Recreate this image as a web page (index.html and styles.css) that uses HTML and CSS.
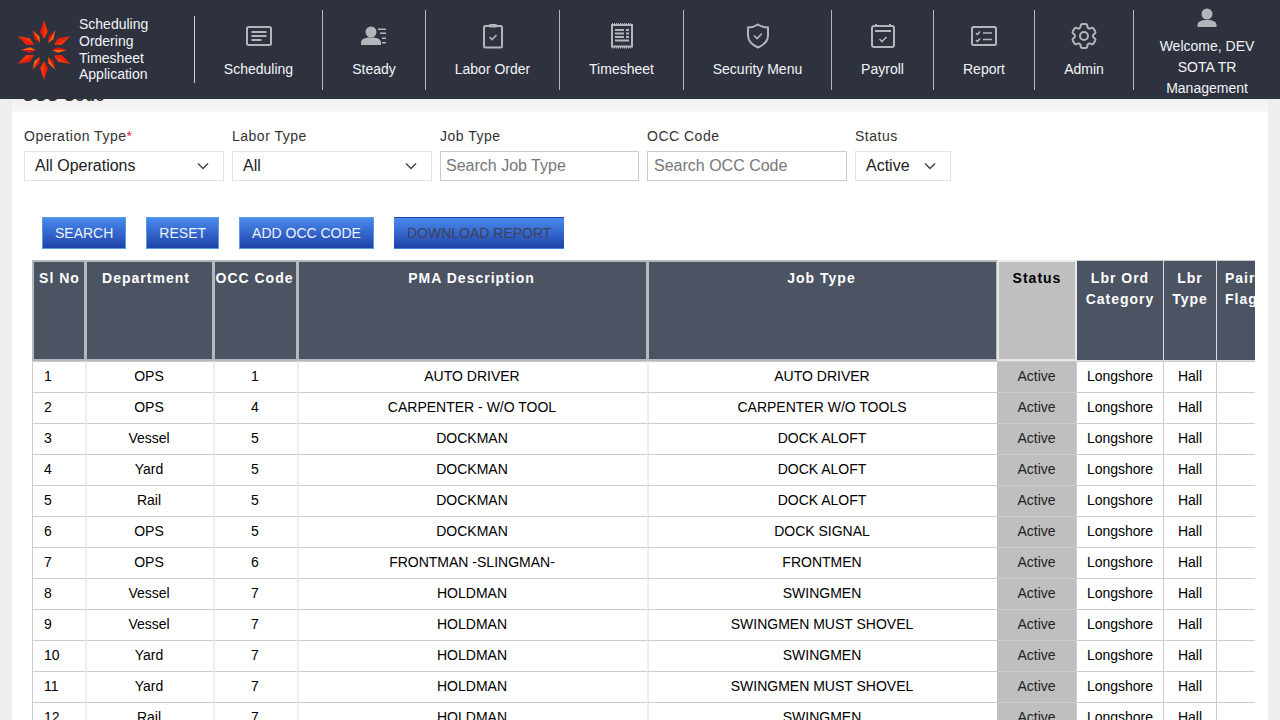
FILE: index.html
```html
<!DOCTYPE html>
<html>
<head>
  <title>OCC Code</title>
  <meta name="viewport" content="width=device-width, initial-scale=1.0">
  <link rel="stylesheet" href="styles.css">
</head>
<body>
  <header class="topbar">
    <div class="brand">
      <svg class="brand-logo" width="60" height="60" viewBox="-30 -30 60 60">
        <defs>
          <g id="spike-long">
            <polygon points="0,-30 -3.800,-18 0,-11" fill="#ee1c08"/>
            <polygon points="0,-30 3.800,-18 0,-11" fill="#f73406"/>
          </g>
          <g id="spike-short">
            <polygon points="0,-23 -2.800,-14 0,-8" fill="#e01408"/>
            <polygon points="0,-23 2.800,-14 0,-8" fill="#ff6210"/>
          </g>
        </defs>
        <use href="#spike-long"/>
        <use href="#spike-short" transform="rotate(30)"/>
        <use href="#spike-long" transform="rotate(62)"/>
        <use href="#spike-short" transform="rotate(90)"/>
        <use href="#spike-long" transform="rotate(118)"/>
        <use href="#spike-short" transform="rotate(150)"/>
        <use href="#spike-long" transform="rotate(180)"/>
        <use href="#spike-short" transform="rotate(210)"/>
        <use href="#spike-long" transform="rotate(242)"/>
        <use href="#spike-short" transform="rotate(270)"/>
        <use href="#spike-long" transform="rotate(298)"/>
        <use href="#spike-short" transform="rotate(330)"/>
      </svg>
      <div class="brand-name">Scheduling<br>Ordering<br>Timesheet<br>Application</div>
    </div>

    <nav class="nav">
      <a class="nav-item w-scheduling">
        <svg class="icon" viewBox="0 0 32 32"><rect x="4" y="7" width="24" height="18" rx="1.500"/><path class="bars" d="M8.500 12h15M8.500 16h15M8.500 20h10"/></svg>
        <span>Scheduling</span>
      </a>
      <a class="nav-item w-steady">
        <svg class="icon" viewBox="0 0 32 32"><circle class="solid" cx="13" cy="12" r="5.500"/><path class="solid" d="M3 25v-2.500c0-3 3-5 10-5s10 2 10 5V25z"/><path class="thin" d="M20 9.300h8M22 13.300h6M24 18.300h4M24 22.700h4"/></svg>
        <span>Steady</span>
      </a>
      <a class="nav-item w-labor">
        <svg class="icon" viewBox="0 0 32 32"><rect x="7" y="6" width="18" height="21.500" rx="1.500"/><rect class="solid" x="12" y="4" width="8" height="3.500" rx="1"/><path class="thin" d="M12.500 17l2.500 2.500 4.500-4.500"/></svg>
        <span>Labor Order</span>
      </a>
      <a class="nav-item w-timesheet">
        <svg class="icon" viewBox="0 0 32 32"><rect x="6" y="5" width="20" height="21.500"/><path class="perf" d="M6 4h20M6 27.500h20"/><path class="bars" d="M9 10h9M9 13.500h9M9 17h9M9 20.500h14M20 10h3M20 13.500h3M20 17h3"/></svg>
        <span>Timesheet</span>
      </a>
      <a class="nav-item w-security">
        <svg class="icon" viewBox="0 0 32 32"><path d="M16 4.500c3 2 6.500 3 10 3v8c0 6-4.500 9.500-10 12-5.500-2.500-10-6-10-12v-8c3.500 0 7-1 10-3z"/><path class="thin" d="M12 15.500l3 3 5-5"/></svg>
        <span>Security Menu</span>
      </a>
      <a class="nav-item w-payroll">
        <svg class="icon" viewBox="0 0 32 32"><rect x="5" y="6" width="22" height="21" rx="2"/><path d="M9 4v2M23 4v2"/><path class="bars" d="M8 11h16"/><path class="thin" d="M12.500 19l2.500 2.500 4.500-4.500"/></svg>
        <span>Payroll</span>
      </a>
      <a class="nav-item w-report">
        <svg class="icon" viewBox="0 0 32 32"><rect x="4" y="7" width="24" height="18" rx="1.500"/><path class="thin" d="M8 13l1.500 1.500 2.500-3M8 20l1.500 1.500 2.500-3M15 13h9M15 19.500h9"/></svg>
        <span>Report</span>
      </a>
      <a class="nav-item w-admin">
        <svg class="icon gear" viewBox="0 0 24 24"><path d="M9.594 3.94c.09-.542.56-.94 1.11-.94h2.593c.55 0 1.02.398 1.11.94l.213 1.281c.063.374.313.686.645.87.074.04.147.083.22.127.325.196.72.257 1.075.124l1.217-.456a1.125 1.125 0 0 1 1.37.49l1.296 2.247a1.125 1.125 0 0 1-.26 1.431l-1.003.827c-.293.241-.438.613-.43.992a7.723 7.723 0 0 1 0 .255c-.008.378.137.75.43.991l1.004.827c.424.35.534.955.26 1.43l-1.298 2.247a1.125 1.125 0 0 1-1.369.491l-1.217-.456c-.355-.133-.75-.072-1.076.124a6.47 6.47 0 0 1-.22.128c-.331.183-.581.495-.644.869l-.213 1.281c-.09.543-.56.94-1.11.94h-2.594c-.55 0-1.019-.398-1.11-.94l-.213-1.281c-.062-.374-.312-.686-.644-.87a6.52 6.52 0 0 1-.22-.127c-.325-.196-.72-.257-1.076-.124l-1.217.456a1.125 1.125 0 0 1-1.369-.49l-1.297-2.247a1.125 1.125 0 0 1 .26-1.431l1.004-.827c.292-.24.437-.613.43-.991a6.932 6.932 0 0 1 0-.255c.007-.38-.138-.751-.43-.992l-1.004-.827a1.125 1.125 0 0 1-.26-1.43l1.297-2.247a1.125 1.125 0 0 1 1.37-.491l1.216.456c.356.133.751.072 1.076-.124.072-.044.146-.086.22-.128.332-.183.582-.495.644-.869l.214-1.28Z"/><circle cx="12" cy="12" r="3"/></svg>
        <span>Admin</span>
      </a>
      <div class="nav-user">
        <svg class="user-icon" width="20" height="20" viewBox="0 0 20 20"><circle cx="10" cy="6" r="5.500"/><path d="M.5 19v-2c0-3 3-5 9.500-5s9.500 2 9.500 5v2z"/></svg>
        <span>Welcome, DEV</span>
        <span>SOTA TR</span>
        <span>Management</span>
      </div>
    </nav>
  </header>

  <main class="page">
    <div class="title-band"><h2>OCC Code</h2></div>

    <section class="card">
      <form class="filters">
        <div class="field f-op">
          <label>Operation Type<em>*</em></label>
          <div class="select"><span>All Operations</span><svg class="chev" width="12" height="8" viewBox="0 0 12 8"><path d="M1 1.500l5 5 5-5"/></svg></div>
        </div>
        <div class="field f-labor">
          <label>Labor Type</label>
          <div class="select"><span>All</span><svg class="chev" width="12" height="8" viewBox="0 0 12 8"><path d="M1 1.500l5 5 5-5"/></svg></div>
        </div>
        <div class="field f-job">
          <label>Job Type</label>
          <input type="text" placeholder="Search Job Type">
        </div>
        <div class="field f-occ">
          <label>OCC Code</label>
          <input type="text" placeholder="Search OCC Code">
        </div>
        <div class="field f-status">
          <label>Status</label>
          <div class="select"><span>Active</span><svg class="chev" width="12" height="8" viewBox="0 0 12 8"><path d="M1 1.500l5 5 5-5"/></svg></div>
        </div>
      </form>

      <div class="actions">
        <button type="button" class="btn">SEARCH</button>
        <button type="button" class="btn">RESET</button>
        <button type="button" class="btn">ADD OCC CODE</button>
        <button type="button" class="btn btn-disabled">DOWNLOAD REPORT</button>
      </div>

      <div class="table-wrap">
        <table class="grid">
          <colgroup>
            <col class="c-si"><col class="c-dept"><col class="c-occ"><col class="c-desc"><col class="c-job"><col class="c-status"><col class="c-cat"><col class="c-type"><col class="c-pair">
          </colgroup>
          <thead>
            <tr>
              <th class="boxed th-si">Sl No</th>
              <th class="boxed th-dept">Department</th>
              <th class="boxed">OCC Code</th>
              <th class="boxed">PMA Description</th>
              <th class="boxed">Job Type</th>
              <th class="th-status">Status</th>
              <th>Lbr Ord Category</th>
              <th>Lbr Type</th>
              <th>Pair Flag</th>
            </tr>
          </thead>
          <tbody>
            <tr><td class="si">1</td><td>OPS</td><td>1</td><td>AUTO DRIVER</td><td>AUTO DRIVER</td><td class="st">Active</td><td>Longshore</td><td>Hall</td><td></td></tr>
            <tr><td class="si">2</td><td>OPS</td><td>4</td><td>CARPENTER - W/O TOOL</td><td>CARPENTER W/O TOOLS</td><td class="st">Active</td><td>Longshore</td><td>Hall</td><td></td></tr>
            <tr><td class="si">3</td><td>Vessel</td><td>5</td><td>DOCKMAN</td><td>DOCK ALOFT</td><td class="st">Active</td><td>Longshore</td><td>Hall</td><td></td></tr>
            <tr><td class="si">4</td><td>Yard</td><td>5</td><td>DOCKMAN</td><td>DOCK ALOFT</td><td class="st">Active</td><td>Longshore</td><td>Hall</td><td></td></tr>
            <tr><td class="si">5</td><td>Rail</td><td>5</td><td>DOCKMAN</td><td>DOCK ALOFT</td><td class="st">Active</td><td>Longshore</td><td>Hall</td><td></td></tr>
            <tr><td class="si">6</td><td>OPS</td><td>5</td><td>DOCKMAN</td><td>DOCK SIGNAL</td><td class="st">Active</td><td>Longshore</td><td>Hall</td><td></td></tr>
            <tr><td class="si">7</td><td>OPS</td><td>6</td><td>FRONTMAN -SLINGMAN-</td><td>FRONTMEN</td><td class="st">Active</td><td>Longshore</td><td>Hall</td><td></td></tr>
            <tr><td class="si">8</td><td>Vessel</td><td>7</td><td>HOLDMAN</td><td>SWINGMEN</td><td class="st">Active</td><td>Longshore</td><td>Hall</td><td></td></tr>
            <tr><td class="si">9</td><td>Vessel</td><td>7</td><td>HOLDMAN</td><td>SWINGMEN MUST SHOVEL</td><td class="st">Active</td><td>Longshore</td><td>Hall</td><td></td></tr>
            <tr><td class="si">10</td><td>Yard</td><td>7</td><td>HOLDMAN</td><td>SWINGMEN</td><td class="st">Active</td><td>Longshore</td><td>Hall</td><td></td></tr>
            <tr><td class="si">11</td><td>Yard</td><td>7</td><td>HOLDMAN</td><td>SWINGMEN MUST SHOVEL</td><td class="st">Active</td><td>Longshore</td><td>Hall</td><td></td></tr>
            <tr><td class="si">12</td><td>Rail</td><td>7</td><td>HOLDMAN</td><td>SWINGMEN</td><td class="st">Active</td><td>Longshore</td><td>Hall</td><td></td></tr>
          </tbody>
        </table>
      </div>
    </section>
  </main>
</body>
</html>
```

FILE: styles.css
```css
* {
    box-sizing: border-box;
}

html, body {
    height: 720px;
    overflow: hidden;
}

body {
    font-family: "Liberation Sans", Arial, sans-serif;
    font-size: 14px;
    margin: 0;
    background-color: #eeeeee;
    color: #000;
}

/* top bar */
.topbar {
    display: flex;
    align-items: flex-start;
    height: 99px;
    background-color: #2e323e;
    color: #f2f4f8;
    position: relative;
    z-index: 2;
}

.brand {
    display: flex;
    align-items: center;
    width: 195px;
    height: 67px;
    margin-top: 16px;
    padding-left: 14px;
    border-right: 1px solid #d0d2d6;
}

.brand-logo {
    flex: none;
}

.brand-name {
    margin-left: 5px;
    line-height: 16.7px;
}

.nav {
    display: flex;
    align-items: flex-start;
    flex: 1;
}

.nav-item {
    display: flex;
    flex-direction: column;
    align-items: center;
    gap: 9px;
    height: 80px;
    margin-top: 10px;
    padding-top: 10px;
    line-height: 17px;
    border-right: 1px solid #b4b6ba;
}

.w-scheduling { width: 128px; }
.w-steady { width: 103px; }
.w-labor { width: 134px; }
.w-timesheet { width: 124px; }
.w-security { width: 148px; }
.w-payroll { width: 102px; }
.w-report { width: 101px; }
.w-admin { width: 99px; }

.icon {
    display: block;
    width: 32px;
    height: 32px;
    fill: none;
    stroke: #b3b5ba;
    stroke-width: 2;
}

.icon .bars {
    stroke-width: 2;
}

.icon .thin {
    stroke-width: 1.6;
}

.icon .solid {
    fill: #b3b5ba;
    stroke: none;
}

.icon .perf {
    stroke-width: 2;
    stroke-dasharray: 1 1;
}

.icon.gear {
    stroke-width: 1.5;
}

.nav-user {
    flex: 1;
    display: flex;
    flex-direction: column;
    align-items: center;
    padding-top: 8px;
    line-height: 21px;
}

.user-icon {
    fill: #b3b5ba;
    margin-bottom: 8px;
}

/* page */
.page {
    margin: 0 12px;
}

.title-band {
    height: 13px;
    padding-left: 10px;
    overflow: hidden;
    background: linear-gradient(#f0f0f0, #f8f8f8);
}

.title-band h2 {
    margin: -12px 0 0;
    font-size: 16px;
    line-height: 18px;
    letter-spacing: 0.3px;
    color: #333;
}

.card {
    background-color: #fff;
    height: 620px;
    padding: 16px 13px 0 12px;
}

.filters {
    display: flex;
    gap: 8px;
}

.field label {
    display: block;
    height: 16px;
    line-height: 16px;
    margin-bottom: 7px;
    letter-spacing: 0.5px;
    color: #333;
}

.field label em {
    color: #e0243c;
    font-style: normal;
}

.f-op, .f-labor {
    width: 200px;
}

.f-job {
    width: 199px;
}

.f-occ {
    width: 200px;
}

.f-status {
    width: 96px;
}

.select {
    display: flex;
    align-items: center;
    justify-content: space-between;
    height: 30px;
    padding: 0 14px 0 10px;
    border: 1px solid #e2e2e2;
    font-size: 16px;
    color: #222;
}

.chev {
    fill: none;
    stroke: #444;
    stroke-width: 1.5;
}

.field input {
    display: block;
    width: 100%;
    height: 30px;
    padding: 0 5px;
    border: 1px solid #cccccc;
    font-family: inherit;
    font-size: 16px;
    outline: none;
}

.f-occ input {
    padding-left: 6px;
}

.field input::placeholder {
    color: #777;
}

.actions {
    display: flex;
    gap: 20px;
    margin: 36px 0 0 18px;
}

.btn {
    height: 32px;
    padding: 0 12px;
    font-family: inherit;
    font-size: 14px;
    color: #eef2fb;
    border: 1px solid #5a9be8;
    background: linear-gradient(#4a8aee, #1f43a8);
}

.btn-disabled {
    padding: 0 13px;
    color: #3d4258;
    border: none;
    border-top: 1px solid #1f43a8;
    border-bottom: 1px solid #3f84e6;
}

.table-wrap {
    width: 1223px;
    margin: 11px 0 0 8px;
    overflow: hidden;
}

.grid {
    width: 1245px;
    table-layout: fixed;
    border-collapse: separate;
    border-spacing: 0;
}

.c-si { width: 53px; }
.c-dept { width: 128px; }
.c-occ { width: 84px; }
.c-desc { width: 350px; }
.c-job { width: 350px; }
.c-status { width: 80px; }
.c-cat { width: 87px; }
.c-type { width: 53px; }
.c-pair { width: 60px; }

.grid th {
    height: 101px;
    padding: 7px 0 0;
    vertical-align: top;
    background-color: #4c5363;
    color: #fff;
    font-size: 14px;
    line-height: 21px;
    letter-spacing: 1px;
    border-top: 1px solid #cccccc;
    border-right: 1px solid #dddddd;
    border-bottom: 1px solid #dddddd;
}

.grid th:last-child {
    text-align: left;
    padding-left: 8px;
}

.grid th.boxed {
    border: 2px solid #b4b7bc;
    border-right-width: 1px;
    padding: 6px 2px 0 0;
}

.grid th.th-si {
    padding-left: 1px;
    padding-right: 0;
}

.grid th.th-dept {
    padding-right: 7px;
}

.grid th.th-status {
    background-color: #bfbfbf;
    color: #000;
    border: 2px solid #e8e8e8;
    padding-top: 6px;
}

.grid td {
    height: 31px;
    padding: 0 0 3px;
    text-align: center;
    border-right: 1px solid #cccccc;
    border-top: 1px solid #cccccc;
}

.grid td:nth-child(-n+5) {
    padding-right: 2px;
    border-right: none;
    border-left: 2px solid #eeeeee;
}

.grid td:first-child {
    border-left: 1px solid #cccccc;
}

.grid td.si {
    text-align: left;
    padding-left: 11px;
}

.grid td.st {
    background-color: #bfbfbf;
    color: #222;
}
```
